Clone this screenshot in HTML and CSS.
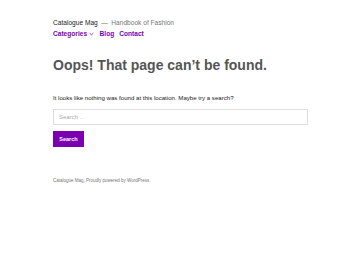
FILE: index.html
```html
<!DOCTYPE html>
<html>
<head>
<meta charset="utf-8">
<link rel="stylesheet" href="styles.css">
</head>
<body>
<div class="page">
  <header class="site-header">
    <div class="branding">
      <span class="site-title">Catalogue Mag</span>
      <span class="sep">—</span>
      <span class="site-desc">Handbook of Fashion</span>
    </div>
    <nav class="nav">
      <a class="nav-item">Categories <svg class="caret" width="5" height="4" viewBox="0 0 5 4"><path d="M0.7 1.1 L2.5 2.8 L4.3 1.1" fill="none" stroke="currentColor" stroke-width="0.8"/></svg></a>
      <a class="nav-item">Blog</a>
      <a class="nav-item">Contact</a>
    </nav>
  </header>
  <main class="main">
    <h1 class="title">Oops! That page can’t be found.</h1>
    <p class="lead">It looks like nothing was found at this location. Maybe try a search?</p>
    <form class="search">
      <input class="search-field" type="search" placeholder="Search …">
      <button class="search-btn" type="button">Search</button>
    </form>
  </main>
  <footer class="footer">Catalogue Mag, Proudly powered by WordPress.</footer>
</div>
</body>
</html>
```
FILE: styles.css
```css
html, body {
  margin: 0;
  padding: 0;
  background: #fff;
}
body {
  font-family: "Liberation Sans", Arial, sans-serif;
  color: #1e1e1e;
}
.page {
  padding: 18px 53px 0 53px;
}
.branding {
  font-size: 6.6px;
  line-height: 10px;
  display: flex;
  gap: 3.5px;
}
.site-title { color: #222; }
.sep, .site-desc { color: #767676; }
.nav {
  display: flex;
  gap: 5px;
  margin-top: 1px;
  font-size: 6.6px;
  line-height: 10px;
  font-weight: bold;
}
.nav-item {
  color: #7a00b0;
  display: flex;
  align-items: center;
}
.caret { margin-left: 1.5px; margin-right: 1px; }
.main {
  padding-top: 17px;
}
.title {
  margin: 0;
  font-size: 14px;
  line-height: 18px;
  color: #555;
  font-weight: bold;
}
.lead {
  margin: 18.5px 0 0;
  font-size: 6.1px;
  line-height: 9px;
  color: #222;
}
.search {
  margin: 7.5px 0 0;
  display: flex;
  flex-direction: column;
  align-items: flex-start;
  gap: 6px;
}
.search-field {
  box-sizing: border-box;
  width: 100%;
  height: 16px;
  border: 1px solid #ddd;
  border-radius: 0;
  padding: 0 5px;
  font-family: inherit;
  font-size: 5.9px;
  outline: none;
  margin: 0;
}
.search-field::placeholder { color: #aaa; }
.search-btn {
  box-sizing: border-box;
  width: 31px;
  height: 16px;
  border: none;
  padding: 0;
  margin: 0;
  background: #7a00b0;
  color: #fff;
  font-family: inherit;
  font-size: 5.5px;
  font-weight: bold;
}
.footer {
  margin-top: 29.5px;
  font-size: 4.5px;
  line-height: 7px;
  color: #767676;
}
```
